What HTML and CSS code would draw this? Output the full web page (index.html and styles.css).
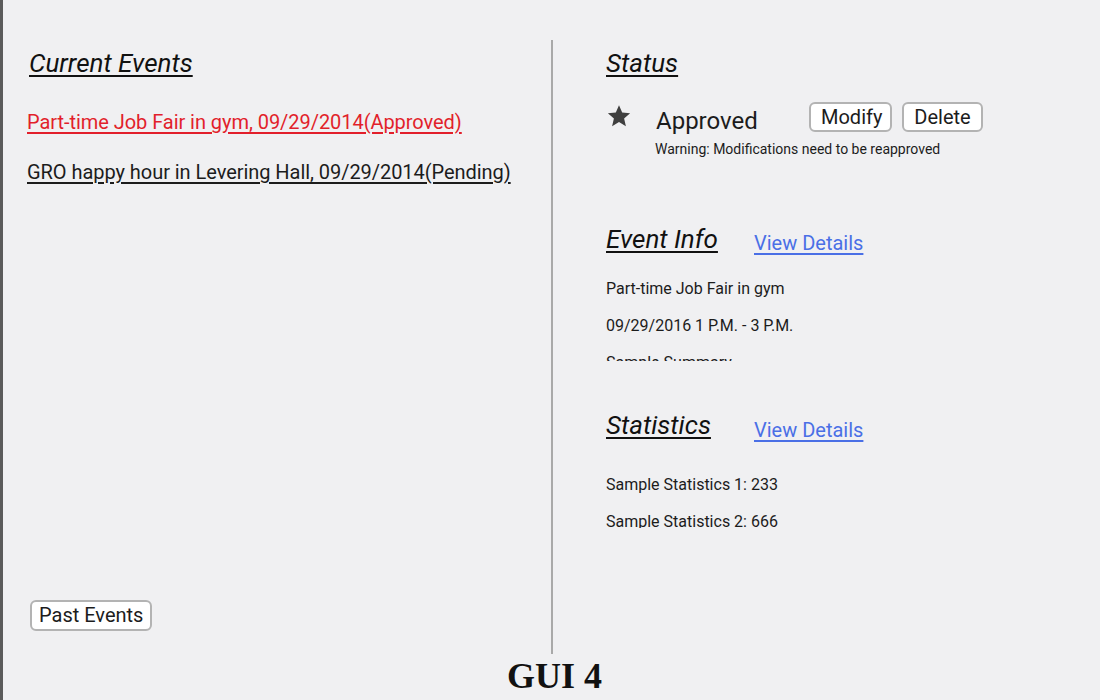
FILE: index.html
```html
<!DOCTYPE html>
<html>
<head>
<meta charset="utf-8">
<link rel="stylesheet" href="styles.css">
</head>
<body>
<div class="page">
  <div class="main">
    <section class="left">
      <h2 class="heading heading-current">Current Events</h2>
      <div class="event-list">
        <a class="event-link approved">Part-time Job Fair in gym, 09/29/2014(Approved)</a>
        <a class="event-link pending">GRO happy hour in Levering Hall, 09/29/2014(Pending)</a>
      </div>
      <button class="btn btn-past">Past Events</button>
    </section>
    <section class="right">
      <h2 class="heading">Status</h2>
      <div class="status-row">
        <svg class="star" viewBox="0 0 24 24" width="24" height="24"><path d="M12 1.2l3.2 7.3 7.9.7-6 5.2 1.8 7.8L12 18.1l-6.9 4.1 1.8-7.8-6-5.2 7.9-.7z" fill="#3f3f3f"/></svg>
        <span class="status-text">Approved</span>
        <button class="btn btn-modify">Modify</button>
        <button class="btn btn-delete">Delete</button>
      </div>
      <p class="warning">Warning: Modifications need to be reapproved</p>

      <div class="section-head head-info">
        <div class="head-cell"><h2 class="heading">Event Info</h2></div>
        <a class="details-link">View Details</a>
      </div>
      <div class="detail-box box-info">
        <p>Part-time Job Fair in gym</p>
        <p>09/29/2016 1 P.M. - 3 P.M.</p>
        <p>Sample Summary</p>
      </div>

      <div class="section-head head-stats">
        <div class="head-cell"><h2 class="heading">Statistics</h2></div>
        <a class="details-link">View Details</a>
      </div>
      <div class="detail-box box-stats">
        <p>Sample Statistics 1: 233</p>
        <p>Sample Statistics 2: 666</p>
      </div>
    </section>
  </div>
  <div class="caption">GUI 4</div>
</div>
</body>
</html>
```

FILE: styles.css
```css
* { box-sizing: border-box; }
html, body { margin: 0; padding: 0; }
body {
  background: #f0f0f2;
  font-family: Roboto, "Liberation Sans", sans-serif;
  color: #1c1c1c;
}
.page {
  width: 1100px;
  height: 700px;
  border-left: 3px solid #5b5b5b;
  overflow: hidden;
}
.main {
  display: flex;
  margin-top: 40px;
  height: 614px;
}
.left {
  width: 548px;
  padding: 8px 0 23px 24px;
  display: flex;
  flex-direction: column;
}
.right {
  flex: 1;
  border-left: 2px solid #a9a9a9;
  padding: 8px 0 0 53px;
}
.heading {
  margin: 0;
  font-size: 26px;
  line-height: 30px;
  font-weight: 400;
  font-style: italic;
  text-decoration: underline;
  text-decoration-thickness: 2px;
  text-underline-offset: 3px;
  color: #111;
}
.heading-current { margin-left: 2px; }
.event-list {
  display: flex;
  flex-direction: column;
  gap: 26px;
  margin-top: 32px;
}
.event-link {
  font-size: 20px;
  line-height: 24px;
  letter-spacing: -0.05px;
  text-decoration: underline;
  text-underline-offset: 3px;
}
.event-link.approved { color: #e21f2b; }
.event-link.pending { color: #1c1c1c; }
.btn {
  font-family: Roboto, "Liberation Sans", sans-serif;
  font-size: 20px;
  line-height: 25px;
  background: #fff;
  color: #1c1c1c;
  border: 2px solid #b3b3b3;
  border-radius: 6px;
  height: 30px;
  padding: 0 10px;
}
.btn-past {
  margin-top: auto;
  margin-left: 3px;
  align-self: flex-start;
  height: 31px;
  padding: 0 7px;
}
.status-row {
  display: flex;
  align-items: flex-start;
  margin-top: 24px;
}
.star {
  margin: 2px 0 0 1px;
  flex: none;
}
.status-text {
  font-size: 24px;
  line-height: 28px;
  margin: 5px 0 0 25px;
  width: 153px;
}
.btn-modify { width: 83px; }
.btn-delete { width: 81px; margin-left: 10px; }
.warning {
  margin: 6px 0 0 49px;
  font-size: 14px;
  line-height: 17px;
}
.section-head {
  display: flex;
  align-items: flex-start;
}
.head-cell { width: 148px; flex: none; }
.head-info { margin-top: 66px; }
.head-stats { margin-top: 49px; }
.details-link {
  font-size: 20px;
  line-height: 24px;
  color: #4a6fe6;
  text-decoration: underline;
  text-underline-offset: 3px;
}
.head-info .details-link { padding-top: 7px; }
.head-stats .details-link { padding-top: 8px; }
.detail-box {
  display: flex;
  flex-direction: column;
  gap: 17px;
  overflow: hidden;
}
.detail-box p {
  margin: 0;
  font-size: 16px;
  line-height: 20px;
  flex: none;
}
.box-info { margin-top: 24px; height: 82px; }
.box-stats { margin-top: 33px; height: 53px; }
.caption {
  margin-top: 2px;
  padding-left: 6px;
  text-align: center;
  font-family: "Liberation Serif", serif;
  font-weight: 700;
  font-size: 36px;
  line-height: 40px;
  color: #111;
}
```
